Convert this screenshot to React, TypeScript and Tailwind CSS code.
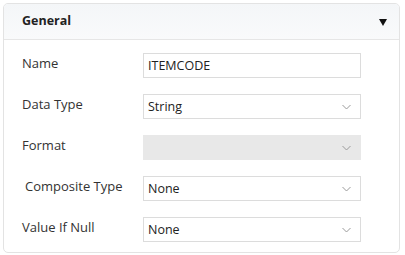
import React from "react";

const Chevron = () => (
  <svg width="9" height="6" viewBox="0 0 9 6" className="shrink-0">
    <path d="M0.5 1 L4.5 5 L8.5 1" fill="none" stroke="#9a9a9a" strokeWidth="1" />
  </svg>
);

const Row = ({ label, value, select, disabled, indent }: { label: string; value?: string; select?: boolean; disabled?: boolean; indent?: boolean }) => (
  <div className="flex items-start h-[25px]">
    <div className={`w-[121px] pt-[1px] text-[13px] text-[#333] ${indent ? "pl-[3px]" : ""}`}>{label}</div>
    <div
      className={`w-[218px] h-[25px] flex items-center justify-between border border-[#dcdcdc] pl-[4px] pr-[9px] text-[12.5px] text-[#222] ${disabled ? "bg-[#e8e8e8] border-[#e8e8e8]" : "bg-white"}`}
    >
      <span className="pt-[1px]">{value}</span>
      {select && <Chevron />}
    </div>
  </div>
);

export default function App() {
  return (
    <div className="w-[405px] h-[255px] bg-white pt-[3px] pl-[3px]" style={{ fontFamily: '"Open Sans", "Noto Sans", sans-serif' }}>
      <div className="w-[397px] h-[250px] border border-[#e3e3e3] rounded-[5px] overflow-hidden">
        <div className="h-[36px] bg-gradient-to-b from-[#f4f6f8] to-[#f9fafb] border-b border-[#e6e6e6] flex items-center justify-between pl-[18px] pr-[12px]">
          <span className="text-[12.5px] font-bold text-[#222]">General</span>
          <svg width="8" height="8" viewBox="0 0 8 8"><path d="M0 1 L8 1 L4 8 Z" fill="#111" /></svg>
        </div>
        <div className="flex flex-col gap-[16px] pt-[13px] pl-[18px]">
          <Row label="Name" value="ITEMCODE" />
          <Row label="Data Type" value="String" select />
          <Row label="Format" select disabled />
          <Row label="Composite Type" value="None" select indent />
          <Row label="Value If Null" value="None" select />
        </div>
      </div>
    </div>
  );
}
